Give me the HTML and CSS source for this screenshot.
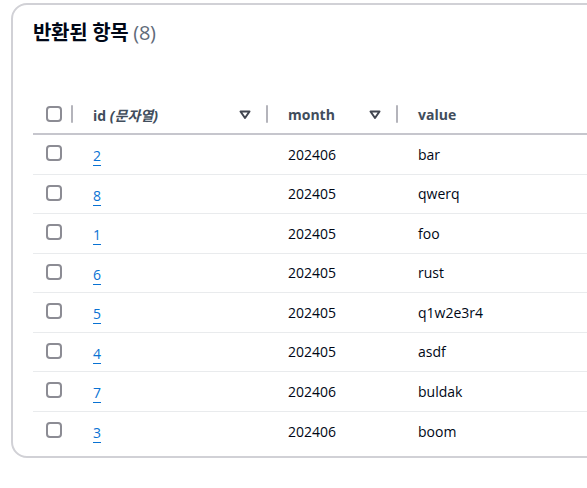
FILE: index.html
```html
<!DOCTYPE html>
<html lang="ko">
<head>
<meta charset="utf-8">
<link rel="stylesheet" href="styles.css">
</head>
<body>
<div class="card">
  <h2 class="title">반환된 항목 <span class="count">(8)</span></h2>
  <div class="table">
    <div class="row head">
      <div class="cell sel"><span class="cb"></span></div>
      <div class="cell hcell"><span class="hlabel">id <i>(문자열)</i></span><svg class="sort" width="12" height="10" viewBox="0 0 12 10"><path d="M1.5 1.5h9L6 8z" fill="none" stroke="#424650" stroke-width="2" stroke-linejoin="round"/></svg></div>
      <div class="cell hcell"><span class="hlabel">month</span><svg class="sort" width="12" height="10" viewBox="0 0 12 10"><path d="M1.5 1.5h9L6 8z" fill="none" stroke="#424650" stroke-width="2" stroke-linejoin="round"/></svg></div>
      <div class="cell hcell"><span class="hlabel">value</span></div>
    </div>
    <div class="row"><div class="cell sel"><span class="cb"></span></div><div class="cell"><a class="link" href="#">2</a></div><div class="cell">202406</div><div class="cell">bar</div></div>
    <div class="row"><div class="cell sel"><span class="cb"></span></div><div class="cell"><a class="link" href="#">8</a></div><div class="cell">202405</div><div class="cell">qwerq</div></div>
    <div class="row"><div class="cell sel"><span class="cb"></span></div><div class="cell"><a class="link" href="#">1</a></div><div class="cell">202405</div><div class="cell">foo</div></div>
    <div class="row"><div class="cell sel"><span class="cb"></span></div><div class="cell"><a class="link" href="#">6</a></div><div class="cell">202405</div><div class="cell">rust</div></div>
    <div class="row"><div class="cell sel"><span class="cb"></span></div><div class="cell"><a class="link" href="#">5</a></div><div class="cell">202405</div><div class="cell">q1w2e3r4</div></div>
    <div class="row"><div class="cell sel"><span class="cb"></span></div><div class="cell"><a class="link" href="#">4</a></div><div class="cell">202405</div><div class="cell">asdf</div></div>
    <div class="row"><div class="cell sel"><span class="cb"></span></div><div class="cell"><a class="link" href="#">7</a></div><div class="cell">202406</div><div class="cell">buldak</div></div>
    <div class="row last"><div class="cell sel"><span class="cb"></span></div><div class="cell"><a class="link" href="#">3</a></div><div class="cell">202406</div><div class="cell">boom</div></div>
  </div>
</div>
</body>
</html>
```

FILE: styles.css
```css
html, body {
  margin: 0;
  padding: 0;
  background: #ffffff;
  overflow: hidden;
}
body {
  font-family: "Open Sans", "Noto Sans CJK KR", sans-serif;
  color: #000716;
  font-size: 14px;
}
.card {
  margin: 3px 0 0 11px;
  width: 680px;
  border: 2px solid #d1d1d6;
  border-radius: 16px;
  padding: 0 0 5px 20px;
  box-sizing: border-box;
}
.title {
  margin: 0;
  padding-top: 14px;
  font-size: 20px;
  line-height: 28px;
  font-weight: 700;
  color: #000716;
  letter-spacing: -0.3px;
  height: 91px;
  box-sizing: border-box;
}
.count {
  font-weight: 400;
  color: #5f6b7a;
}
.table {
  display: flex;
  flex-direction: column;
}
.row {
  display: grid;
  grid-template-columns: 38px 195px 130px 1fr;
  height: 39.5px;
  border-bottom: 1px solid #e9ebed;
  box-sizing: border-box;
}
.row.last {
  border-bottom: none;
}
.row.head {
  height: 39px;
  border-bottom: 2px solid #c6c6cd;
  color: #414d5c;
  font-weight: 700;
}
.cell {
  display: flex;
  align-items: center;
  padding-left: 22px;
  white-space: nowrap;
}
.cell.sel {
  padding-left: 13px;
}
.row .cell.sel .cb {
  margin-top: -2px;
}
.hcell {
  position: relative;
  padding-left: 22px;
}
.hcell::before {
  content: "";
  position: absolute;
  left: 0;
  top: 9px;
  width: 2px;
  height: 18px;
  background: #b4b4bb;
  border-radius: 1px;
}
.hlabel i {
  font-style: italic;
}
.sort {
  margin-left: auto;
  margin-right: 15px;
}
.cb {
  display: block;
  width: 16px;
  height: 16px;
  border: 2px solid #8c8c94;
  border-radius: 4px;
  box-sizing: border-box;
}
.link {
  color: #0972d3;
  text-decoration: underline;
  text-underline-offset: 4px;
  text-decoration-thickness: 1px;
  padding-top: 3px;
}
```
